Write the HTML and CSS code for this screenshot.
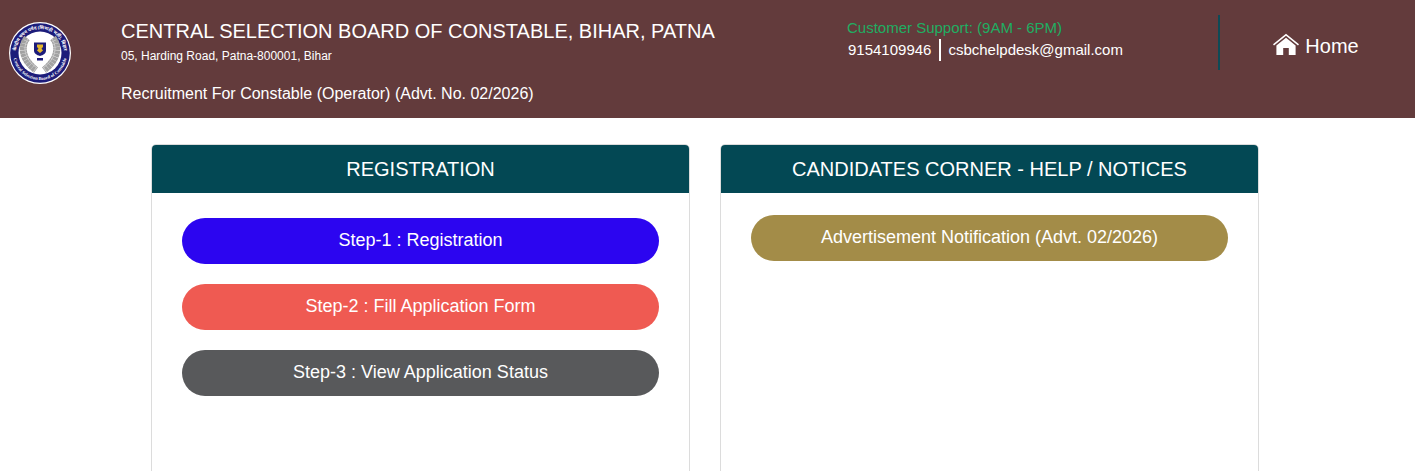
FILE: index.html
```html
<!DOCTYPE html>
<html lang="en">
<head>
<meta charset="utf-8">
<title>Central Selection Board of Constable, Bihar, Patna</title>
<link rel="stylesheet" href="styles.css">
</head>
<body>
<header class="site-header">
  <div class="logo-wrap">
    <svg class="logo" viewBox="0 0 64 64" width="64" height="64" aria-hidden="true">
      <circle cx="32" cy="32" r="31" fill="#fff"/>
      <circle cx="32" cy="32" r="29.800" fill="#1c1c7a"/>
      <circle cx="32" cy="32" r="21.500" fill="#fff"/>
      <defs>
        <path id="ringTop" d="M8 32a24 24 0 0 1 48 0"/>
        <path id="ringBottom" d="M5 32a27 27 0 0 0 54 0"/>
      </defs>
      <text class="ring-text"><textPath href="#ringTop" startOffset="50%" text-anchor="middle">केन्द्रीय चयन पर्षद (सिपाही भर्ती), बिहार</textPath></text>
      <text class="ring-text"><textPath href="#ringBottom" startOffset="50%" text-anchor="middle">Central Selection Board of Constable</textPath></text>
      <path class="wreath" d="M19 17C13 24 13 38 28 49"/>
      <path class="wreath" d="M45 17C51 24 51 38 36 49"/>
      <path class="wreath-light" d="M20 18C15 25 15 37 29 47"/>
      <path class="wreath-light" d="M44 18C49 25 49 37 35 47"/>
      <path d="M26 21.500h12v8c0 3-2.500 4.500-6 5.500-3.500-1-6-2.500-6-5.500z" fill="#1c1c7a"/>
      <path d="M29 23.500h6v2.500l-1.500 1.500 1.500 2-3 2.500-3-2.500 1.500-2-1.500-1.500z" fill="#e3b72c"/>
      <rect x="29" y="37" width="6" height="2.500" fill="#1c1c7a"/>
    </svg>
  </div>
  <div class="title-block">
    <h1 class="board-name">CENTRAL SELECTION BOARD OF CONSTABLE, BIHAR, PATNA</h1>
    <p class="address">05, Harding Road, Patna-800001, Bihar</p>
    <p class="recruitment">Recruitment For Constable (Operator) (Advt. No. 02/2026)</p>
  </div>
  <div class="support">
    <p class="support-label">Customer Support: (9AM - 6PM)</p>
    <p class="support-contact"><span class="phone">9154109946</span><span class="email">csbchelpdesk@gmail.com</span></p>
  </div>
  <a class="home-link" href="#">
    <svg class="home-icon" viewBox="0 0 26 22" width="26" height="22" aria-hidden="true">
      <path d="M13 .8 0 11.200l1 1.200L13 2.800l12 9.600 1-1.200z" fill="#fff"/>
      <path d="M13 4.800 3.400 12.400V22h6.800v-7h5.600v7h6.800V12.400z" fill="#fff"/>
    </svg>
    <span>Home</span>
  </a>
</header>
<main class="cards">
  <section class="card">
    <h2 class="card-title">REGISTRATION</h2>
    <div class="card-body card-body-left">
      <a class="pill pill-blue" href="#">Step-1 : Registration</a>
      <a class="pill pill-red" href="#">Step-2 : Fill Application Form</a>
      <a class="pill pill-grey" href="#">Step-3 : View Application Status</a>
    </div>
  </section>
  <section class="card">
    <h2 class="card-title">CANDIDATES CORNER - HELP / NOTICES</h2>
    <div class="card-body card-body-right">
      <a class="pill pill-gold" href="#">Advertisement Notification (Advt. 02/2026)</a>
    </div>
  </section>
</main>
</body>
</html>
```
FILE: styles.css
```css
* { box-sizing: border-box; }
html, body { margin: 0; padding: 0; height: 100%; overflow: hidden; background: #fff; }
body { font-family: "Liberation Sans", Arial, sans-serif; color: #fff; }
p, h1, h2 { margin: 0; font-weight: 400; }

.site-header {
  display: flex;
  height: 118px;
  background: #633b3c;
}
.logo-wrap { width: 121px; padding: 21px 0 0 8px; flex: none; }
.logo { display: block; }
.ring-text { font-family: "Liberation Serif", "Noto Sans", serif; font-size: 4.6px; font-weight: 700; fill: #fff; }
.wreath { fill: none; stroke: #a2a2a2; stroke-width: 7; stroke-dasharray: 3 .3; }
.wreath-light { fill: none; stroke: #cfcfcf; stroke-width: 1; }

.title-block { width: 726px; flex: none; padding-top: 19px; }
.board-name { font-size: 20px; line-height: 24px; }
.address { font-size: 12px; line-height: 14px; margin-top: 6px; }
.recruitment { font-size: 16px; line-height: 20px; margin-top: 21px; }

.support { width: 371px; flex: none; padding-top: 19px; }
.support-label { font-size: 15px; line-height: 18px; color: #1fae62; }
.support-contact { display: flex; align-items: center; font-size: 15px; line-height: 22px; margin-top: 2px; padding-left: 1px; }
.phone { padding-right: 8px; border-right: 2px solid #fff; }
.email { padding-left: 7px; }

.home-link {
  display: flex;
  align-items: center;
  justify-content: center;
  gap: 6px;
  width: 197px;
  height: 55px;
  margin-top: 15px;
  padding: 15px 3px 8px 0;
  border-left: 2px solid #0e4a56;
  color: #fff;
  font-size: 20px;
  text-decoration: none;
  flex: none;
}
.home-icon { display: block; margin-bottom: 5px; }

.cards {
  display: flex;
  gap: 30px;
  height: 353px;
  overflow: hidden;
  padding: 26px 0 0 151px;
}
.card {
  width: 539px;
  height: 400px;
  flex: none;
  border: 1px solid #dcdcdc;
  border-radius: 5px;
  overflow: hidden;
}
.card-title {
  height: 48px;
  background: #034854;
  font-size: 20px;
  line-height: 48px;
  text-align: center;
}
.card-body { display: flex; flex-direction: column; gap: 20px; padding-left: 30px; padding-right: 30px; }
.card-body-left { padding-top: 25px; }
.card-body-right { padding-top: 22px; }
.pill {
  display: block;
  height: 46px;
  border-radius: 23px;
  color: #fff;
  font-size: 18px;
  line-height: 44px;
  text-align: center;
  text-decoration: none;
}
.pill-blue { background: #2c05f0; }
.pill-red { background: #ef5a52; }
.pill-grey { background: #58595b; }
.pill-gold { background: #a38c48; }
```
